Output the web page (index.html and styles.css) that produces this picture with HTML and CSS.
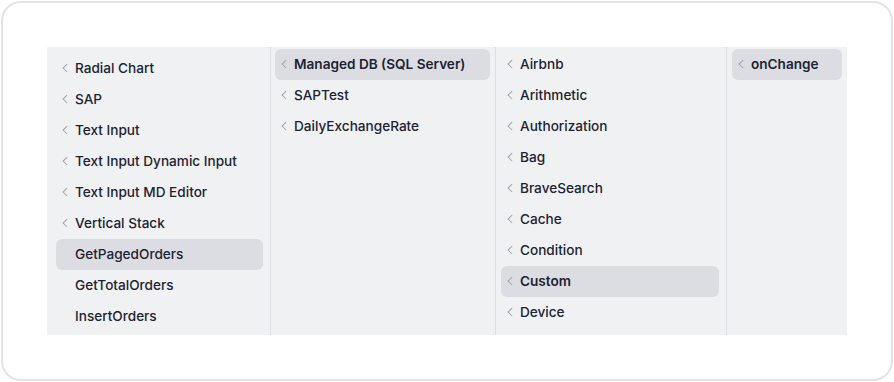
FILE: index.html
```html
<!DOCTYPE html>
<html lang="en">
<head>
  <meta charset="UTF-8">
  <meta name="viewport" content="width=device-width, initial-scale=1.0">
  <title>Column Browser</title>
  <link rel="stylesheet" href="styles.css">
</head>
<body>

<div class="card">
  <div class="browser">
    <ul class="column col-1">
      <li class="item"><span class="chev"></span>Radial Chart</li>
      <li class="item"><span class="chev"></span>SAP</li>
      <li class="item"><span class="chev"></span>Text Input</li>
      <li class="item"><span class="chev"></span>Text Input Dynamic Input</li>
      <li class="item"><span class="chev"></span>Text Input MD Editor</li>
      <li class="item"><span class="chev"></span>Vertical Stack</li>
      <li class="item leaf active">GetPagedOrders</li>
      <li class="item leaf">GetTotalOrders</li>
      <li class="item leaf">InsertOrders</li>
    </ul>
    <ul class="column col-2">
      <li class="item open"><span class="chev"></span>Managed DB (SQL Server)</li>
      <li class="item"><span class="chev"></span>SAPTest</li>
      <li class="item"><span class="chev"></span>DailyExchangeRate</li>
    </ul>
    <ul class="column col-3">
      <li class="item"><span class="chev"></span>Airbnb</li>
      <li class="item"><span class="chev"></span>Arithmetic</li>
      <li class="item"><span class="chev"></span>Authorization</li>
      <li class="item"><span class="chev"></span>Bag</li>
      <li class="item"><span class="chev"></span>BraveSearch</li>
      <li class="item"><span class="chev"></span>Cache</li>
      <li class="item"><span class="chev"></span>Condition</li>
      <li class="item open"><span class="chev"></span>Custom</li>
      <li class="item"><span class="chev"></span>Device</li>
    </ul>
    <ul class="column col-4">
      <li class="item open"><span class="chev"></span>onChange</li>
    </ul>
  </div>
</div>

</body>
</html>
```

FILE: styles.css
```css
* { box-sizing: border-box; }
html, body {
  margin: 0;
  background: #fff;
  font-family: Inter, "Noto Sans", sans-serif;
}
body { padding: 1px; }
.card {
  width: 892px;
  height: 380px;
  border: 2px solid #e2e4e8;
  border-radius: 20px;
  padding: 44px;
}
.browser {
  display: flex;
  width: 800px;
  height: 288px;
  background: #f0f1f3;
  overflow: hidden;
}
.column {
  list-style: none;
  margin: 0;
  height: 100%;
  overflow: hidden;
  border-right: 1px solid #dcdee2;
}
.col-1 { width: 224px; padding: 6px 7px 0 9px; }
.col-2 { width: 225px; padding: 2px 5px 0 4px; }
.col-3 { width: 231px; padding: 2px 7px 0 5px; }
.col-4 { width: 120px; padding: 2px 5px 0 5px; border-right: none; }

.item {
  position: relative;
  height: 31px;
  line-height: 31px;
  padding-left: 19px;
  border-radius: 6px;
  font-size: 13.6px;
  font-weight: 500;
  color: #1c2333;
  white-space: nowrap;
}
.item.active { background: #dcdde2; }
.item.open { background: #dcdde2; font-weight: 600; }

.chev {
  position: absolute;
  left: 7.5px;
  top: 12px;
  width: 5.5px;
  height: 5.5px;
  border-left: 1.4px solid #9ba1aa;
  border-bottom: 1.4px solid #9ba1aa;
  transform: rotate(45deg);
}
```
